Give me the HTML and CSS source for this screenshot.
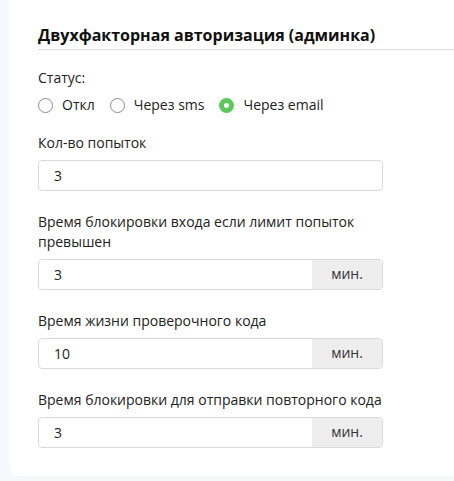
FILE: index.html
```html
<!DOCTYPE html>
<html lang="ru">
<head>
<meta charset="utf-8">
<link rel="stylesheet" href="styles.css">
</head>
<body>
<div class="card">
  <h2 class="title">Двухфакторная авторизация (админка)</h2>
  <div class="field status">
    <div class="label">Статус:</div>
    <div class="radios">
      <label class="radio"><span class="circle"></span>Откл</label>
      <label class="radio"><span class="circle"></span>Через sms</label>
      <label class="radio"><span class="circle checked"></span>Через email</label>
    </div>
  </div>
  <div class="field">
    <div class="label">Кол-во попыток</div>
    <div class="input"><span class="value">3</span></div>
  </div>
  <div class="field">
    <div class="label">Время блокировки входа если лимит попыток превышен</div>
    <div class="input"><span class="value">3</span><span class="addon">мин.</span></div>
  </div>
  <div class="field">
    <div class="label">Время жизни проверочного кода</div>
    <div class="input"><span class="value">10</span><span class="addon">мин.</span></div>
  </div>
  <div class="field last">
    <div class="label">Время блокировки для отправки повторного кода</div>
    <div class="input"><span class="value">3</span><span class="addon">мин.</span></div>
  </div>
</div>
</body>
</html>
```
FILE: styles.css
```css
html, body {
  margin: 0;
  padding: 0;
  background: #f7f8fc;
  height: 481px;
  overflow: hidden;
  font-family: "Open Sans", "Noto Sans", sans-serif;
  color: #222;
}
.card {
  margin-left: 9px;
  background: #fff;
  border-bottom-left-radius: 10px;
  padding: 24px 0 28px 29px;
}
.title {
  margin: 0 0 18px 0;
  font-size: 16px;
  font-weight: 700;
  line-height: 22px;
  color: #111;
  padding-bottom: 3px;
  border-bottom: 1px solid #dcdce4;
}
.field {
  width: 345px;
  margin-bottom: 21px;
}
.field.status { margin-bottom: 18px; }
.field.last { margin-bottom: 0; }
.label {
  font-size: 14px;
  line-height: 20px;
  margin-bottom: 7px;
}
.radios {
  display: flex;
  gap: 15px;
  margin-top: 1px;
}
.radio {
  display: flex;
  align-items: center;
  gap: 9px;
  font-size: 14px;
  line-height: 20px;
}
.circle {
  width: 15px;
  height: 15px;
  box-sizing: border-box;
  border: 1.5px solid #8a8a8a;
  border-radius: 50%;
  display: inline-block;
}
.circle.checked {
  border: 5px solid #5cc85c;
  background: #fff;
}
.input {
  display: flex;
  height: 31px;
  box-sizing: border-box;
  border: 1px solid #dadada;
  border-radius: 4px;
  overflow: hidden;
  font-size: 14px;
}
.value {
  flex: 1;
  padding-left: 15px;
  line-height: 29px;
}
.addon {
  width: 70px;
  background: #eeeeee;
  text-align: center;
  line-height: 27px;
  color: #333;
}
```
